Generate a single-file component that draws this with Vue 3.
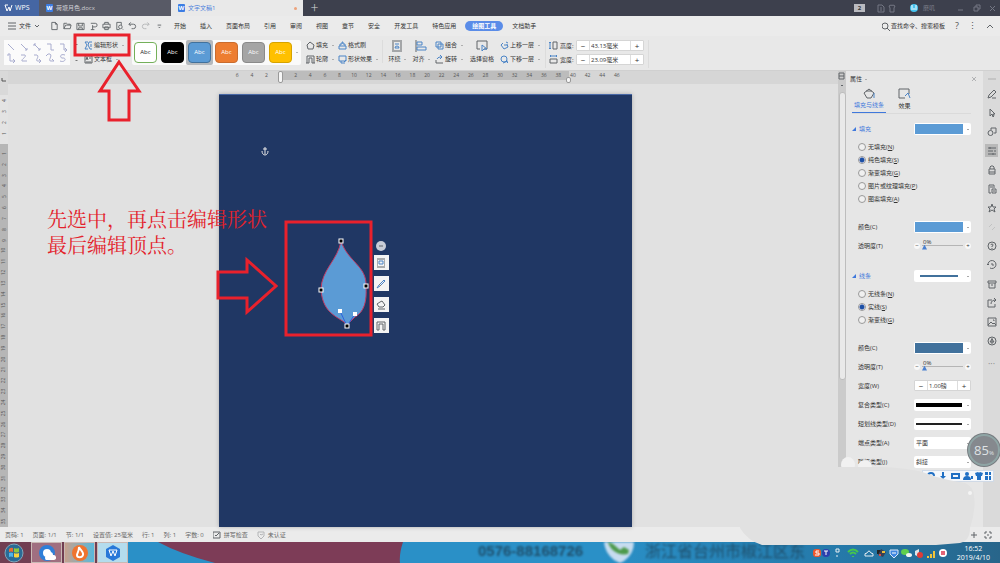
<script setup>
import { ref } from 'vue'

const menus = ['开始', '插入', '页面布局', '引用', '审阅', '视图', '章节', '安全', '开发工具', '特色应用', '绘图工具', '文档助手']

const quick = [
  'M2 1h4l2 2v6H2z M6 1v2h2',
  'M1 8V2h3l1 1h3v1 M1 8l2-4h6L8 8z',
  'M1 2h8v7H1z M3 2v3h4V2 M3 9V7h4v2',
  'M2 2h5a2 2 0 0 1 0 4H4 M4 4v5 M2 9h4',
  'M3 3V1h4v2 M1 3h8v4H1z M3 6h4v3H3z',
  'M2 1h5v3 M2 1v8h3 M6 4a2 2 0 1 1 0 4a2 2 0 0 1 0-4 M8 8l1 1',
  'M3 1L1 3l2 2 M1 3h5a2 2 0 0 1 0 5H4'
]

const lines = [
  'M2 2l6 6', 'M2 2l6 6M8 6v2H6', 'M2 2l6 6M2 4V2h2M8 6v2H6', 'M2 2h4v6h3', 'M2 2h4v6h3M7 6l2 2-2 2',
  'M2 3V1h2v7h4M7 6l2 2-2 2', 'M2 2h4c2 2-4 4-3 6h5', 'M2 2h3c3 2-3 6 1 6h2M7 6l2 2-2 2', 'M1 3l2-2h2c3 2-3 7 1 7h3M7 6l2 2', 'M7 2c-6-2-5 4-2 3c4 0 2 5-3 3'
]

const styles = [
  { bg: '#ffffff', fg: '#222222', edge: '#74b05a' },
  { bg: '#000000', fg: '#ffffff', edge: '#000000' },
  { bg: '#5b9bd5', fg: '#ffffff', edge: '#41719c' },
  { bg: '#ed7d31', fg: '#ffffff', edge: '#c96c2e' },
  { bg: '#a5a5a5', fg: '#ffffff', edge: '#8a8a8a' },
  { bg: '#ffc000', fg: '#ffffff', edge: '#d6a300' }
]

const hTicks = [6, 4, 2, '', ...Array.from({ length: 23 }, (_, i) => (i + 1) * 2)]
const vTicks = Array.from({ length: 35 }, (_, i) => i + 1)

const fillKinds = [['无填充', 'N'], ['纯色填充', 'S'], ['渐变填充', 'G'], ['图片或纹理填充', 'P'], ['图案填充', 'A']]
const lineKinds = [['无线条', 'N'], ['实线', 'S'], ['渐变线', 'G']]
const fill = ref('S')
const stroke = ref('S')
const width = ref('1.00磅')
const sizeH = ref('43.13毫米')
const sizeW = ref('23.09毫米')

const side = [
  { n: '编辑', d: 'M1 9l1-3 5-5 2 2-5 5z M5 9h4' },
  { n: '选择', d: 'M3 1v7l2-2 1 3 1-1-1-2h2z' },
  { n: '形状', d: 'M4 1h5v5H7 M1 6a2 2 0 1 1 5 0a2 2 0 0 1-5 0 M4 1v2' },
  { n: '属性', d: 'M1 2h8 M1 5h5 M1 8h8 M8 4v2 M3 1v2 M6 7v2', on: true },
  { n: '限制编辑', d: 'M2 4h6v5H2z M3 4V2l1-1h2l1 1v2 M2 7h6' },
  { n: '样式', d: 'M2 1h5v3 M2 1v8h2 M5 5h4v4H5z M3 3h3 M6 7h2' },
  { n: '收藏', d: 'M5 1l1 3h3L7 6l1 3-3-2-3 2 1-3-2-2h3z' },
  { n: '同步', d: 'M2 5l3-3 M5 8l3-3', dim: true },
  { n: '帮助', d: 'M1 5a4 4 0 1 1 8 0a4 4 0 0 1-8 0 M4 4a1 1 0 1 1 1 1v1 M5 7v1' },
  { n: '历史', d: 'M1 5a4 4 0 1 1 2 3 M0 4l1 1 1-1 M5 3v2h2' },
  { n: '备份', d: 'M1 2h8v2H1z M2 4v5h6V4 M4 6h2' },
  { n: '分享', d: 'M5 2H1v7h7V6 M4 6c0-3 2-4 5-4 M7 0l2 2-2 2' },
  { n: '图片', d: 'M1 1h8v8H1z M1 8l3-3 2 2 1-1 2 2 M6 3h1v1' },
  { n: '推荐', d: 'M1 5a4 4 0 1 1 8 0a4 4 0 0 1-8 0 M5 2v6 M3 6l2-3 2 3z' }
]
</script>

<template>
  <div class="app">
    <header class="titlebar">
      <button class="home"><svg width="9" height="8" viewBox="0 0 9 8"><path d="M1 1l2 6 2-4 1 4 2-6M1 1h3" fill="none" stroke="#fff" /></svg>WPS</button>
      <button class="doc"><i class="w">W</i>荷塘月色.docx</button>
      <button class="doc active"><i class="w">W</i>文字文稿1<b class="dot"></b></button>
      <button class="plus" aria-label="新建">＋</button>
      <div class="winctl">
        <span class="count">2</span>
        <svg width="20" height="9" viewBox="0 0 20 9" class="line"><path d="M1 1h4l2 2v5H1zM3 4h2M3 6h2M12 2l2-1q1 1 2 0l2 1-1 2v4h-4V4z" /></svg>
        <span class="user"><svg width="10" height="10" viewBox="0 0 10 10"><circle cx="5" cy="5" r="4" fill="#46c3ef" /><path d="M3 2v3M7 2v3M2 6h6" stroke="#fff" fill="none" /></svg>磨叽</span>
        <svg width="40" height="9" viewBox="0 0 40 9" class="line"><path d="M2 6h5M18 3h4v4h-4zM20 3V1h4v4h-2M34 2l5 5M39 2l-5 5" /></svg>
      </div>
    </header>

    <nav class="menubar">
      <button class="file"><svg width="8" height="8" viewBox="0 0 8 8" class="line"><path d="M0 1h8M0 4h8M0 7h8" /></svg>文件<svg width="5" height="4" viewBox="0 0 5 4" class="line"><path d="M1 1l2 2 2-2" /></svg></button>
      <div class="quick">
        <svg v-for="d in quick" :key="d" width="9" height="10" viewBox="0 0 10 10" class="line"><path :d="d" /></svg>
        <svg width="9" height="10" viewBox="0 0 10 10" class="line faint"><path d="M7 1l2 2-2 2 M9 3H4a2 2 0 0 0 0 5h2" /></svg>
        <svg width="9" height="10" viewBox="0 0 10 10" class="line"><path d="M4 4h4M5 6l1 1 1-1" /></svg>
      </div>
      <div class="menus">
        <button v-for="m in menus" :key="m" :class="{ pill: m === '绘图工具' }">{{ m }}</button>
      </div>
      <div class="find">
        <svg width="8" height="9" viewBox="0 0 8 9" class="line"><circle cx="3" cy="4" r="3" /><path d="M5 6l3 3" /></svg>
        <span>查找命令、搜索模板</span>
      </div>
      <div class="help"><b>?</b><b>⋮</b><svg width="8" height="6" viewBox="0 0 8 6" class="line"><path d="M1 5l3-3 3 3" /></svg></div>
    </nav>

    <section class="ribbon">
      <div class="lines">
        <svg v-for="d in lines" :key="d" width="10" height="10" viewBox="0 0 10 10"><path :d="d" /></svg>
      </div>
      <div class="scroller"><em></em><em></em></div>
      <div class="stack edit">
        <button><svg width="9" height="9" viewBox="0 0 9 9" class="blue"><path d="M4 1H1l2 3-2 4h3M8 1H5L4 4l2 4h2M7 3v3" /></svg>编辑形状<em></em></button>
        <button><svg width="9" height="9" viewBox="0 0 9 9" class="line"><path d="M1 1h7v7H1zM2 5l1-3 1 3M5 3h2M2 7h5" /></svg>文本框<em></em></button>
      </div>
      <div class="gallery">
        <button v-for="(s, i) in styles" :key="s.bg" class="cell" :class="{ picked: i === 2 }"><span :style="{ background: s.bg, color: s.fg, borderColor: s.edge }">Abc</span></button>
        <span class="more"><em></em></span>
      </div>
      <div class="stack pair">
        <button><svg width="9" height="9" viewBox="0 0 9 9" class="line"><path d="M1 4l3-3 4 3-1 4H2z" /></svg>填充<em></em></button>
        <button><svg width="9" height="9" viewBox="0 0 9 9" class="line"><path d="M1 8V1h7v7M3 8V3h3v5M0 8h3M6 8h3" /></svg>轮廓<em></em></button>
      </div>
      <div class="stack brush">
        <button><svg width="9" height="9" viewBox="0 0 9 9" class="blue"><path d="M1 5h7v3H1zM2 5V3h2V1h1v2h2v2" /></svg>格式刷</button>
        <button><svg width="9" height="9" viewBox="0 0 9 9" class="blue"><path d="M1 1h7v5H1zM3 6v2h4M6 7l2-2" /></svg>形状效果<em></em></button>
      </div>
      <div class="big first"><svg width="12" height="12" viewBox="0 0 12 12" class="line"><path d="M1 1h10M1 11h10M1 3h2M9 3h2M1 5h2M9 5h2M1 7h2M9 7h2M1 9h2M9 9h2" /><path class="b" d="M4 8a2 2 0 1 1 4 0zM4 4h4" /></svg><button>环绕<em></em></button></div>
      <div class="big"><svg width="12" height="12" viewBox="0 0 12 12" class="line"><path d="M1 0v12" /><path class="b" d="M2 2h5v3H2zM2 7h9v3H2z" /></svg><button>对齐<em></em></button></div>
      <div class="stack combo">
        <button><svg width="9" height="9" viewBox="0 0 9 9" class="blue"><path d="M1 1h5v5H1zM3 3h5v5H3z" /></svg>组合<em></em></button>
        <button><svg width="9" height="9" viewBox="0 0 9 9" class="line"><path d="M1 8h7M1 5v3" /><path class="b" d="M2 4c1-2 3-2 5-2M5 0l2 2-2 2" /></svg>旋转<em></em></button>
      </div>
      <div class="big pane"><svg width="12" height="12" viewBox="0 0 12 12" class="line"><path d="M1 1h10v8H8M1 1v8h3" /><path class="b" d="M6 5v6l2-2h3z" /></svg><button>选择窗格</button></div>
      <div class="stack order">
        <button><svg width="9" height="9" viewBox="0 0 9 9" class="blue"><path d="M3 2L1 4l3 4 4-2-1-3M4 4h3M6 1l2 1" /></svg>上移一层<em></em></button>
        <button><svg width="9" height="9" viewBox="0 0 9 9" class="blue"><path d="M1 4a3 3 0 1 1 6 0a3 3 0 0 1-6 0M3 8l5-2M6 6l2 2" /></svg>下移一层<em></em></button>
      </div>
      <div class="stack size">
        <label><svg width="9" height="9" viewBox="0 0 9 9" class="line"><path d="M4 1h4v7H4z" /><path class="b" d="M1 1v7M0 2l1-1 1 1M0 7l1 1 1-1" /></svg><span>高度:</span><span class="spin"><button>−</button><input v-model="sizeH" /><button>+</button></span></label>
        <label><svg width="9" height="9" viewBox="0 0 9 9" class="line"><path d="M1 4h7v4H1z" /><path class="b" d="M1 1h7M2 0L1 1l1 1M7 0l1 1-1 1" /></svg><span>宽度:</span><span class="spin"><button>−</button><input v-model="sizeW" /><button>+</button></span></label>
      </div>
    </section>

    <main class="work">
      <div class="vruler">
        <svg class="corner" width="8" height="24" viewBox="0 0 8 24"><path d="M2 7v3h4" fill="none" stroke="#555" /></svg>
        <div class="vtop"><span v-for="n in [4, 3, 2, 1]" :key="n"><i>{{ n }}</i></span></div>
        <div class="vmain"><span v-for="n in vTicks" :key="n"><i>{{ n }}</i></span></div>
      </div>
      <div class="canvas">
        <div class="hruler"><div class="strip"><span v-for="(n, i) in hTicks" :key="i">{{ n }}</span><b class="stop"></b><b class="stop end"></b></div></div>
        <div class="desk">
          <div class="page">
            <svg class="anchor" width="10" height="10" viewBox="0 0 10 10"><path d="M5 1v7M3 3h4M2 5c0 2 1 4 3 4s3-2 3-4" fill="none" stroke="#e8e8e8" /></svg>
            <svg class="leaf" width="56" height="94" viewBox="316 236 56 94">
              <path d="M341 241C348 262 367 266 366 286C367 302 364 312 355 317L347 325C341 317 323 316 321 290C321 270 338 260 341 241z" fill="#5b9bd5" stroke="#c23a63" />
              <path d="M340 311l7 15 8-12" stroke="#2c62e0" fill="none" />
              <g fill="#000" stroke="#fff"><rect x="339" y="239" width="4" height="4" /><rect x="364" y="284" width="4" height="4" /><rect x="319" y="288" width="4" height="4" /><rect x="345" y="324" width="4" height="4" /></g>
              <g fill="#fff"><rect x="338" y="309" width="4" height="4" /><rect x="353" y="312" width="4" height="4" /></g>
            </svg>
            <div class="floats">
              <button class="round" aria-label="收起"><svg width="6" height="4" viewBox="0 0 6 4" class="line"><path d="M1 2h4" /></svg></button>
              <button aria-label="环绕"><svg width="10" height="10" viewBox="0 0 10 10" class="line"><path d="M1 1h8M1 9h8M1 3h1M1 5h1M1 7h1M8 3h1M8 5h1M8 7h1" /><path class="b" d="M3 3h4v3H3z" /></svg></button>
              <button aria-label="样式"><svg width="10" height="10" viewBox="0 0 10 10" class="blue"><path d="M1 9l2-3 5-5 1 1-5 5z" /><path d="M3 5l2 2" stroke="#777" /></svg></button>
              <button aria-label="填充"><svg width="10" height="10" viewBox="0 0 10 10" class="line"><path d="M1 4l3-2 2-1 3 4-2 2H3zM2 9h7" /></svg></button>
              <button aria-label="轮廓"><svg width="10" height="10" viewBox="0 0 10 10" class="line"><path d="M1 1h8v8H7V3H3v6H1z" /></svg></button>
            </div>
          </div>
        </div>
      </div>
      <div class="vscroll"><svg width="8" height="18" viewBox="0 0 8 18" class="line"><path d="M1 1h5v6H1zM1 4h5M3 14l1-1 1 1" /></svg><div class="thumb"></div></div>

      <aside class="panel">
        <div class="ptitle"><span>属性<em></em></span><svg width="6" height="6" viewBox="0 0 6 6" class="line faint"><path d="M1 1l4 4M5 1L1 5" /></svg></div>
        <div class="ptabs">
          <button class="on"><svg width="13" height="12" viewBox="0 0 13 12" class="line"><path d="M1 5l5-4 5 4-3 5H4zM3 3h6" /><path class="b" d="M11 5v5" /></svg>填充与线条</button>
          <button><svg width="13" height="12" viewBox="0 0 13 12" class="line"><path d="M7 10H1V1h10v5" /><path class="b" d="M7 8l3-3 2 5" /></svg>效果</button>
        </div>

        <div class="sec"><h3>填充</h3><button class="drop" aria-label="填充预设"><i class="bar sky"></i></button></div>
        <div class="radios"><label v-for="k in fillKinds" :key="k[1]"><input v-model="fill" type="radio" name="fill" :value="k[1]" />{{ k[0] }}(<u>{{ k[1] }}</u>)</label></div>
        <div class="fields">
          <div class="field"><span>颜色(C)</span><button class="drop" aria-label="填充颜色"><i class="bar sky"></i></button></div>
          <label class="field"><span>透明度(T)</span><span class="slide"><b>−</b><input type="range" value="0" /><b>+</b><small>0%</small></span></label>
        </div>

        <div class="sec"><h3>线条</h3><button class="drop" aria-label="线条预设"><i class="bar thin"></i></button></div>
        <div class="radios"><label v-for="k in lineKinds" :key="k[1]"><input v-model="stroke" type="radio" name="line" :value="k[1]" />{{ k[0] }}(<u>{{ k[1] }}</u>)</label></div>
        <div class="fields">
          <div class="field"><span>颜色(C)</span><button class="drop" aria-label="线条颜色"><i class="bar steel"></i></button></div>
          <label class="field"><span>透明度(T)</span><span class="slide"><b>−</b><input type="range" value="0" /><b>+</b><small>0%</small></span></label>
          <label class="field"><span>宽度(W)</span><span class="spin"><button>−</button><input v-model="width" /><button>+</button></span></label>
          <div class="field"><span>复合类型(C)</span><button class="drop" aria-label="复合类型"><i class="bar thick"></i></button></div>
          <div class="field"><span>短划线类型(D)</span><button class="drop" aria-label="短划线类型"><i class="bar dash"></i></button></div>
          <label class="field"><span>端点类型(A)</span><span class="drop"><select><option>平面</option></select></span></label>
          <label class="field"><span>联接类型(J)</span><span class="drop"><select><option>斜接</option></select></span></label>
        </div>
      </aside>

      <div class="sidebar">
        <span class="grip"></span>
        <button v-for="s in side" :key="s.n" :aria-label="s.n" :class="{ on: s.on, dim: s.dim }"><svg width="10" height="10" viewBox="0 0 10 10" class="line"><path :d="s.d" /></svg></button>
        <span class="dots">···</span>
      </div>
    </main>

    <footer class="status">
      <span>页码: 1</span><span>页面: 1/1</span><span>节: 1/1</span><span>设置值: 25毫米</span><span>行: 1</span><span>列: 1</span><span>字数: 0</span>
      <span><svg width="8" height="8" viewBox="0 0 8 8" class="line"><path d="M0 1h7v6H0zM2 4l1 1 3-3" /></svg>拼写检查</span>
      <span><svg width="8" height="8" viewBox="0 0 8 8" class="line faint"><path d="M1 1h6v4L4 8 1 5zM3 3l1 1 2-1" /></svg>未认证</span>
      <span class="zoom"><svg width="8" height="8" viewBox="0 0 8 8" class="line"><path d="M4 1v6M1 4h6" /></svg><svg width="8" height="8" viewBox="0 0 8 8" class="line"><path d="M1 3V1h2M5 1h2v2M7 5v2H5M3 7H1V5M3 4h2" /></svg></span>
    </footer>

    <footer class="taskbar">
      <svg class="wall" preserveAspectRatio="none" viewBox="0 0 1000 21"><path d="M0 0h127v21H0z" fill="#713e52" /><path d="M158 0h245q-4 12-3 21H215Q180 12 158 0z" fill="#7d3c57" /></svg>
      <div class="advert"><b>0576-88168726</b><svg width="30" height="21" viewBox="0 0 30 21"><path d="M0 0h30q0 12-10 19l-4 2-6-3Q1 11 0 0z" fill="#c7dcf0" /><path d="M4 0c2 8 10 14 20 12l1-4-5-3-4 3-7-6z" fill="#4d9a4b" /></svg><span>浙江省台州市椒江区东</span></div>
      <button class="orb" aria-label="开始"><svg width="20" height="20" viewBox="0 0 20 20"><circle cx="10" cy="10" r="9" fill="#2a6b96" stroke="#7fa8bc" /><path d="M5 6q2-2 4-1v4q-2-1-4 0z" fill="#e86a34" /><path d="M10 5q2 1 5 0v4q-3 1-5 0z" fill="#8cc63f" /><path d="M5 10q2-1 4 0v4q-2-1-4 0z" fill="#4fb3ea" /><path d="M10 10q2 1 5 0v4q-3 1-5 0z" fill="#fbd23c" /></svg></button>
      <button class="task rose" aria-label="浏览器"><svg width="18" height="18" viewBox="0 0 18 18"><circle cx="9" cy="9" r="6" fill="#fff" stroke="#2f7fd8" stroke-width="4" /><path d="M8 16a3 3 0 0 1 1-5 3 3 0 0 1 6 0 2 2 0 0 1 1 5z" fill="#fff" /></svg></button>
      <button class="task" aria-label="图片工具"><svg width="18" height="18" viewBox="0 0 18 18"><circle cx="9" cy="9" r="8" fill="#ef7430" /><path d="M8 3c1 3 5 5 4 8s-6 3-6 0c0-2 2-3 2-8z" fill="none" stroke="#fff" stroke-width="2" /></svg></button>
      <button class="task lit" aria-label="WPS文字"><svg width="18" height="18" viewBox="0 0 18 18"><path d="M9 1l7 4v8l-7 4-7-4V5z" fill="#2878d8" /><path d="M5 6l2 6 2-5 2 5 2-6H5" fill="none" stroke="#fff" /></svg></button>
      <div class="tray">
        <svg width="140" height="16" viewBox="0 0 140 16">
          <rect x="3" y="4" width="8" height="8" rx="3" fill="#f0562d" /><path d="M9 6H6v2h3v2H5" stroke="#fff" fill="none" />
          <circle cx="16" cy="8" r="4" fill="#2c3fae" /><path d="M14 6h4M16 6v4" stroke="#fff" fill="none" />
          <path d="M26 4h3v3h-3zM26 11h2" stroke="#e9eef2" fill="none" />
          <path d="M38 7q5-5 10 0M40 9q3-3 6 0M43 11v1" stroke="#46c64c" stroke-width="2" fill="none" />
          <path d="M55 11h8q1-3-2-3-2-4-4 0-3 0-2 3z" stroke="#e4edf2" fill="none" />
          <path d="M67 5h4v4h-4z" fill="#222" /><path d="M71 4l5 3-3 5-5-2z" fill="#384055" /><path d="M72 6h3v2h-3z" fill="#e9bd3b" /><path d="M69 9h2v2h-2z" fill="#d64a44" />
          <path d="M80 5h8v4l-4 4-4-4z" fill="#3f87df" stroke="#d9e8f8" /><path d="M82 8h4" stroke="#fff" />
          <ellipse cx="95" cy="7" rx="4" ry="3" fill="#60cf4d" /><ellipse cx="99" cy="10" rx="3" ry="2" fill="#f2f6f2" />
          <path d="M105 6l4-2v8l-4-2z" fill="#dfe7ec" /><circle cx="110" cy="10" r="3" fill="#e03c38" />
          <path d="M118 13v-2M121 13V9M124 13V6" stroke="#f2c43a" stroke-width="2" />
          <circle cx="133" cy="8" r="4" fill="#fff" /><rect x="131" y="6" width="4" height="4" fill="#e46577" />
        </svg>
        <time>16:52<br />2019/4/10</time>
      </div>
    </footer>

    <div class="ime"><svg width="66" height="10" viewBox="0 0 66 10" fill="#1f6fc4"><path d="M2 5a4 4 0 0 1 8 0H8a2 2 0 0 0-4 0zM17 1h2v4h-2zM15 5h6l-3 3z" /><path d="M26 2h9v6h-9zM28 4v2h5V4z" fill-rule="evenodd" /><circle cx="42" cy="3" r="2" /><path d="M38 9q0-4 4-4t4 4zM46 5h2v3h-2zM50 2l3-1q1 1 2 0l3 1-1 3h-1v4h-4V5h-1zM60 1h3v3h-3zM64 1h2v3h-2zM60 5h3v4h-3zM64 5h2v4h-2z" /></svg></div>
    <svg class="smudge" width="260" height="96" viewBox="740 450 260 96">
      <ellipse cx="848" cy="465" rx="7" ry="8" fill="#f1f1f1" /><ellipse cx="865" cy="466" rx="7" ry="6" fill="#f1f1f1" />
      <path d="M740 467H880Q912 468 928 474T965 483Q974 487 974 496Q976 510 970 528Q970 541 960 543L936 545H762Q748 541 740 528z" fill="#e1e1e1" />
      <circle cx="970" cy="493" r="2" fill="#f4f4f4" />
    </svg>
    <div class="gauge">85<small>%</small></div>

    <svg class="marks" width="400" height="345" viewBox="0 0 400 345" fill="none" stroke="#e9212c" stroke-width="3">
      <path d="M75 35h54v20H75zM119 62l20 29h-10v29h-20V91H100zM286 222h85v113H286zM218 272h29v-12l29 26-29 26v-14h-29z" />
    </svg>
    <p class="note">先选中，再点击编辑形状<br />最后编辑顶点。</p>
  </div>
</template>

<style>
body { margin: 0; }
</style>

<style scoped>
* { box-sizing: border-box; }
.app { position: relative; display: flex; flex-direction: column; min-height: 100vh; overflow: hidden; background: #e1e1e1; color: #333; font: 6px/8px "Open Sans", "Noto Sans CJK SC", sans-serif; }
button, input, select { font: inherit; color: inherit; border: 0; padding: 0; margin: 0; background: none; }
button { display: flex; align-items: center; white-space: nowrap; }
svg { flex: none; }
i { font-style: normal; }
.line, .blue { fill: none; stroke: #606468; }
.blue, .line .b { stroke: #4b84c6; }
.faint { opacity: .4; }
em { flex: none; display: inline-block; border: 1px solid transparent; border-top-color: #777; border-bottom: 0; margin-left: 3px; vertical-align: middle; }

.titlebar { display: flex; height: 16px; background: #3d404d; color: #b8bac2; }
.home { width: 39px; padding-left: 4px; gap: 2px; background: #4566a3; color: #fff; font-size: 7px; }
.doc { width: 132px; padding-left: 7px; gap: 3px; background: #585a66; color: #d0d1d6; }
.doc.active { background: #e9e9e9; color: #4a80dc; padding-right: 6px; }
.w { width: 7px; height: 8px; border-radius: 1px; background: #3c7de4; color: #fff; font-weight: bold; line-height: 8px; text-align: center; }
.dot { width: 3px; height: 3px; border-radius: 50%; background: #eda27b; margin-left: auto; }
.plus { padding: 0 7px; font-size: 9px; color: #d6d7db; }
.winctl { display: flex; align-items: center; gap: 12px; margin-left: auto; padding-right: 4px; color: #7b7e89; }
.winctl .line { stroke: #747784; }
.count { width: 11px; height: 8px; background: #b9bac0; color: #333; text-align: center; font-weight: bold; }
.user { display: flex; align-items: center; gap: 4px; margin-right: 9px; }

.menubar { display: flex; align-items: center; height: 20px; background: #ebebeb; }
.file { width: 50px; padding-left: 8px; gap: 3px; }
.quick { display: flex; gap: 4px; width: 124px; }
.menus { display: flex; gap: 14px; }
.pill { padding: 1px 7px; margin: 0 -5px; border-radius: 6px; background: #5a8ce8; color: #fff; font-weight: bold; }
.find { display: flex; align-items: center; gap: 1px; margin-left: auto; }
.help { display: flex; align-items: center; gap: 9px; padding: 0 6px 0 10px; font-size: 9px; color: #555; }
.help b { font-weight: normal; }

.ribbon { display: flex; align-items: flex-start; height: 35px; padding: 4px 4px 0; background: #e8e8e8; border-bottom: 1px solid #d0d0d0; }
.lines { display: grid; grid-template-columns: repeat(5, 1fr); flex: 0 0 66px; height: 25px; padding: 1px; background: #fbfbfb; place-items: center; }
.lines path { fill: none; stroke: #a9adcf; }
.scroller { display: flex; flex-direction: column; justify-content: space-between; flex: 0 0 10px; height: 25px; padding: 4px 2px; }
.stack { display: flex; flex-direction: column; gap: 4px; }
.stack button, .stack label { display: flex; align-items: center; gap: 1px; height: 10px; }
.edit { flex: 0 0 52px; padding-left: 4px; }
.gallery { display: flex; flex: 0 0 169px; height: 25px; background: #fafafa; border-radius: 2px; }
.cell { flex: 0 0 27px; height: 25px; justify-content: center; border-radius: 2px; }
.cell span { width: 23px; height: 21px; border: 1px solid; border-radius: 4px; line-height: 19px; text-align: center; }
.picked { background: #b5b9bd; }
.more { padding-top: 8px; }
.more em { margin-left: 2px; }
.pair { flex: 0 0 36px; padding-left: 5px; }
.brush { flex: 0 0 45px; padding-left: 1px; }
.big { display: flex; flex-direction: column; align-items: center; gap: 3px; flex: 0 0 20px; }
.first { flex-basis: 29px; border-left: 1px solid #dcdcdc; }
.combo { flex: 0 0 37px; padding-left: 4px; }
.pane { flex-basis: 28px; }
.order { flex: 0 0 47px; padding-left: 2px; margin-left: 2px; }
.size { flex: 0 0 104px; padding-left: 3px; border-left: 1px solid #dcdcdc; border-right: 1px solid #dcdcdc; gap: 3px; height: 28px; }
.size label { gap: 2px; height: 11px; }
.size label > span:nth-child(2) { width: 14px; }
.spin { display: flex; width: 68px; height: 11px; background: #fff; border: 1px solid #d5d5d5; border-radius: 1px; }
.spin button { flex: 0 0 12px; height: 100%; justify-content: center; font-size: 8px; }
.spin input { min-width: 0; flex: 1; border: solid #ddd; border-width: 0 1px; padding-left: 1px; }

.work { display: flex; flex: 1; }
.vruler { display: flex; flex-direction: column; flex: 0 0 8px; min-width: 0; background: #d9d9d9; color: #555; font-size: 5px; }
.vtop { display: grid; grid-auto-rows: 11px; height: 49px; background: #e3e3e3; }
.vmain { display: flex; flex-direction: column; flex: 1; padding-top: 4px; background: #b6b6b6; }
.vmain span { flex: 1; min-height: 0; }
.vtop span, .vmain span { display: grid; place-items: center; line-height: 5px; }
.vruler span i { transform: rotate(-90deg); }
.canvas { display: flex; flex-direction: column; flex: 1; min-width: 0; }
.hruler { height: 13px; padding-left: 8px; background: #d6d6d6; }
.strip { position: relative; display: flex; width: 394px; height: 9px; margin: 0 auto; background: linear-gradient(90deg, transparent 13%, #bcbcbc 13% 86%, transparent 86%); color: #555; font-size: 5px; }
.strip span { flex: 1; text-align: center; line-height: 9px; }
.stop { position: absolute; left: 13%; top: 0; width: 5px; height: 12px; margin-left: -3px; border: 1px solid #999; background: #f6f6f6; border-radius: 2px; }
.stop.end { left: 86%; top: 6px; height: 6px; }
.desk { display: flex; flex: 1; margin-left: 4px; background: #e1e1e1; }
.page { position: relative; width: 413px; margin: 10px auto 0; background: #203764; border-top: 1px solid #4767a5; box-shadow: 0 0 4px #aaa; }
.anchor { position: absolute; left: 41px; top: 51px; }
.leaf { position: absolute; left: 97px; top: 141px; }
.floats { position: absolute; left: 155px; top: 146px; display: flex; flex-direction: column; align-items: center; gap: 6px; }
.floats button { width: 15px; height: 15px; justify-content: center; background: #f4f4f4; }
.floats .round { width: 10px; height: 10px; margin-bottom: -2px; border-radius: 50%; background: #c9cdd8; }
.vscroll { display: flex; flex-direction: column; align-items: center; flex: 0 0 8px; padding-top: 1px; background: #cbcbcb; }
.thumb { width: 7px; height: 288px; margin-top: 2px; border: 1px solid #bdbdbd; border-radius: 3px; background: #e9e9e9; }

.panel { flex: 0 0 137px; padding: 0 12px; background: #e6e6e6; }
.ptitle { display: flex; justify-content: space-between; align-items: center; height: 16px; margin: 0 -6px 0 -8px; }
.ptabs { display: flex; gap: 10px; height: 27px; margin: 0 0 6px -6px; border-bottom: 1px solid #dadada; }
.ptabs button { flex-direction: column; justify-content: space-between; padding: 1px 2px 3px; }
.ptabs .on { color: #3f78dc; border-bottom: 1px solid #3f78dc; }
.sec { display: flex; align-items: center; justify-content: space-between; height: 18px; }
.sec h3 { margin: 0 0 0 -6px; font: inherit; color: #3f78dc; }
.sec h3::before { content: ""; display: inline-block; margin-right: 3px; border: solid transparent; border-width: 0 0 4px 4px; border-bottom-color: #3f78dc; }
.drop { position: relative; display: flex; align-items: center; width: 57px; height: 12px; padding: 1px; background: #fff; border-radius: 2px; }
.drop::after { content: ""; position: absolute; right: 2px; top: 6px; border: 1px solid transparent; border-top-color: #555; }
.bar { width: 48px; height: 10px; }
.sky { background: #5b9bd5; }
.steel { background: #41719c; }
.thin { width: 38px; height: 2px; margin-left: 5px; background: #41719c; }
.thick { width: 46px; height: 4px; margin-left: 1px; background: #000; }
.dash { width: 46px; height: 2px; margin-left: 1px; background: #222; }
.radios { display: grid; grid-auto-rows: 13px; margin-top: 2px; }
.radios label { display: flex; align-items: center; }
.radios input { appearance: none; width: 8px; height: 8px; margin-right: 2px; border: 1px solid #999; border-radius: 50%; background: #f0f0f0; }
.radios input:checked { background: radial-gradient(#1c4fa5 0 2px, #eef 3px); }
.fields { margin: 12px 0; }
.fields:last-child { margin-bottom: 0; }
.field { display: flex; align-items: center; justify-content: space-between; height: 19px; }
.field .spin { width: 57px; }
.field select { appearance: none; width: 100%; padding-left: 1px; }
.slide { position: relative; display: flex; align-items: center; gap: 2px; width: 57px; }
.slide b { width: 6px; height: 6px; border-radius: 50%; background: #f8f8f8; font-weight: normal; line-height: 6px; text-align: center; }
.slide input { appearance: none; flex: 1; min-width: 0; height: 1px; background: #b5b5b5; }
.slide input::-webkit-slider-thumb { appearance: none; width: 5px; height: 5px; margin-top: 3px; background: #4a80d0; clip-path: polygon(50% 0, 100% 100%, 0 100%); }
.slide small { position: absolute; left: 9px; top: -5px; font-size: 6px; }

.sidebar { display: flex; flex-direction: column; align-items: center; flex: 0 0 17px; background: #dadada; }
.grip { width: 8px; height: 2px; margin: 7px 0 4px; border: solid #c5c5c5; border-width: 1px 0; }
.sidebar button { width: 13px; height: 13px; margin: 3px 0; justify-content: center; }
.sidebar .on { background: #b9b9b9; }
.sidebar .dim { opacity: .2; }
.dots { padding-top: 10px; color: #888; font-size: 9px; }

.status { display: flex; align-items: center; gap: 9px; height: 15px; padding: 0 8px 0 5px; background: #ebebeb; color: #666; }
.status span { display: flex; align-items: center; gap: 3px; white-space: nowrap; }
.status .zoom { margin-left: auto; gap: 6px; }

.taskbar { position: relative; display: flex; align-items: center; height: 21px; gap: 2px; background: linear-gradient(90deg, #2a90c7 60%, #2578a8 85%, #28658a); overflow: hidden; }
.wall { position: absolute; inset: 0; width: 100%; height: 100%; }
.advert { position: absolute; left: 478px; top: 0; display: flex; filter: blur(1px); color: #1f4f6c; font-family: "Liberation Sans", "Noto Sans CJK SC", sans-serif; white-space: nowrap; }
.advert b { width: 126px; font-size: 15px; line-height: 17px; }
.advert span { margin-left: 11px; font-size: 16px; line-height: 20px; }
.orb { position: relative; width: 29px; padding-left: 4px; }
.task { position: relative; width: 31px; height: 21px; justify-content: center; border: 1px solid #c9b9b4; background: linear-gradient(90deg, #c7a08d, #58b9dc); }
.task.rose { background: #a06f80; }
.task.lit { background: #b4dced; }
.tray { position: relative; display: flex; align-items: center; gap: 7px; margin-left: auto; padding-right: 10px; }
.tray time { color: #fff; font-size: 7px; line-height: 9px; text-align: center; }

.ime { position: absolute; right: 6px; top: 470px; display: flex; align-items: center; height: 12px; padding: 0 2px; background: #f4f7fb; border: 1px solid #cfd9e6; }
.smudge { position: absolute; right: 0; top: 450px; }
.gauge { position: absolute; right: 0; top: 434px; width: 32px; height: 32px; border: 2px solid #8fa5a5; border-radius: 50%; background: #85898e; color: #dfe2e5; font-size: 13px; line-height: 28px; text-align: center; box-shadow: 0 0 0 1px #777c80; }
.gauge small { font-size: 6px; }
.marks { position: absolute; left: 0; top: 0; pointer-events: none; }
.note { position: absolute; left: 47px; top: 207px; margin: 0; color: #e3222b; font: 20px/26px "Liberation Serif", "Noto Serif CJK SC", "Noto Sans CJK SC", serif; white-space: nowrap; }
</style>
